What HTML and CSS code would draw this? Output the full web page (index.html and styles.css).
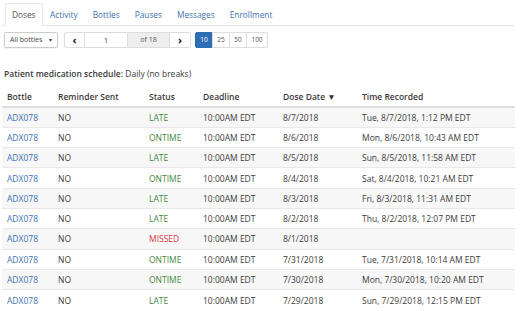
FILE: index.html
```html
<!DOCTYPE html>
<html lang="en">
<head>
    <meta charset="UTF-8">
    <title>Doses</title>
    <link rel="stylesheet" href="styles.css">
</head>
<body>

    <!-- Tabs -->
    <ul class="tabs">
        <li class="active"><a href="#">Doses</a></li>
        <li><a href="#">Activity</a></li>
        <li><a href="#">Bottles</a></li>
        <li><a href="#">Pauses</a></li>
        <li><a href="#">Messages</a></li>
        <li><a href="#">Enrollment</a></li>
    </ul>

    <!-- Controls -->
    <div class="controls">
        <div class="select">All bottles <span class="caret">&#9662;</span></div>
        <div class="pager">
            <span class="btn arrow">&#8249;</span>
            <span class="page-input">1</span>
            <span class="addon">of 18</span>
            <span class="btn arrow">&#8250;</span>
        </div>
        <div class="sizes">
            <span class="size active">10</span>
            <span class="size">25</span>
            <span class="size">50</span>
            <span class="size">100</span>
        </div>
    </div>

    <p class="schedule"><b>Patient medication schedule:</b> Daily (no breaks)</p>

    <!-- Doses table -->
    <table class="doses">
        <colgroup>
            <col class="c-bottle">
            <col class="c-reminder">
            <col class="c-status">
            <col class="c-deadline">
            <col class="c-date">
            <col>
        </colgroup>
        <thead>
            <tr>
                <th>Bottle</th>
                <th>Reminder Sent</th>
                <th>Status</th>
                <th>Deadline</th>
                <th>Dose Date &#9660;</th>
                <th>Time Recorded</th>
            </tr>
        </thead>
        <tbody>
            <tr><td><a href="#">ADX078</a></td><td>NO</td><td class="late">LATE</td><td>10:00AM EDT</td><td>8/7/2018</td><td>Tue, 8/7/2018, 1:12 PM EDT</td></tr>
            <tr><td><a href="#">ADX078</a></td><td>NO</td><td class="ontime">ONTIME</td><td>10:00AM EDT</td><td>8/6/2018</td><td>Mon, 8/6/2018, 10:43 AM EDT</td></tr>
            <tr><td><a href="#">ADX078</a></td><td>NO</td><td class="late">LATE</td><td>10:00AM EDT</td><td>8/5/2018</td><td>Sun, 8/5/2018, 11:58 AM EDT</td></tr>
            <tr><td><a href="#">ADX078</a></td><td>NO</td><td class="ontime">ONTIME</td><td>10:00AM EDT</td><td>8/4/2018</td><td>Sat, 8/4/2018, 10:21 AM EDT</td></tr>
            <tr><td><a href="#">ADX078</a></td><td>NO</td><td class="late">LATE</td><td>10:00AM EDT</td><td>8/3/2018</td><td>Fri, 8/3/2018, 11:31 AM EDT</td></tr>
            <tr><td><a href="#">ADX078</a></td><td>NO</td><td class="late">LATE</td><td>10:00AM EDT</td><td>8/2/2018</td><td>Thu, 8/2/2018, 12:07 PM EDT</td></tr>
            <tr><td><a href="#">ADX078</a></td><td>NO</td><td class="missed">MISSED</td><td>10:00AM EDT</td><td>8/1/2018</td><td></td></tr>
            <tr><td><a href="#">ADX078</a></td><td>NO</td><td class="ontime">ONTIME</td><td>10:00AM EDT</td><td>7/31/2018</td><td>Tue, 7/31/2018, 10:14 AM EDT</td></tr>
            <tr><td><a href="#">ADX078</a></td><td>NO</td><td class="ontime">ONTIME</td><td>10:00AM EDT</td><td>7/30/2018</td><td>Mon, 7/30/2018, 10:20 AM EDT</td></tr>
            <tr><td><a href="#">ADX078</a></td><td>NO</td><td class="late">LATE</td><td>10:00AM EDT</td><td>7/29/2018</td><td>Sun, 7/29/2018, 12:15 PM EDT</td></tr>
        </tbody>
    </table>

</body>
</html>
```

FILE: styles.css
```css
/* General Reset */
* {
    margin: 0;
    padding: 0;
    box-sizing: border-box;
}

body {
    font-family: 'Open Sans', 'Noto Sans', sans-serif;
    font-size: 8.5px;
    color: #3a3a3a;
    background-color: #fff;
    padding: 3px 5px 0 2px;
    overflow: hidden;
}

a {
    color: #3d72b0;
    text-decoration: none;
}

/* Tabs */
.tabs {
    list-style: none;
    display: flex;
    border-bottom: 1px solid #e6e6e6;
    padding-left: 3px;
    height: 23px;
}

.tabs li {
    margin-bottom: -1px;
}

.tabs li a {
    display: block;
    height: 23px;
    line-height: 22px;
    padding: 0 6px;
    font-size: 8.3px;
    border: 1px solid transparent;
    border-radius: 3px 3px 0 0;
}

.tabs li.active a {
    color: #555;
    background-color: #fff;
    border-color: #e6e6e6 #e6e6e6 #fff;
}

.tabs li + li a {
    padding: 0 6.5px;
}

/* Controls */
.controls {
    display: flex;
    align-items: center;
    margin-top: 6px;
    margin-left: 2px;
    height: 16px;
}

.select {
    width: 54px;
    height: 16px;
    line-height: 14px;
    border: 1px solid #ccc;
    border-radius: 2px;
    padding-left: 5px;
    font-size: 7px;
    color: #444;
    box-shadow: 0 1px 1px rgba(0, 0, 0, 0.05);
}

.select .caret {
    font-size: 6px;
    margin-left: 5px;
}

.pager {
    display: flex;
    margin-left: 6px;
    height: 16px;
}

.pager span {
    display: block;
    height: 16px;
    line-height: 14px;
    border: 1px solid #ddd;
    text-align: center;
    font-size: 7px;
}

.pager .arrow {
    width: 21px;
    font-size: 11px;
    font-weight: bold;
    line-height: 13px;
    color: #222;
}

.pager .arrow:first-child {
    border-radius: 2px 0 0 2px;
}

.pager .arrow:last-child {
    border-radius: 0 2px 2px 0;
    border-left: none;
}

.pager .page-input {
    width: 42px;
    border-left: none;
    border-right: none;
    font-size: 8px;
    color: #555;
}

.pager .addon {
    width: 43px;
    background-color: #eee;
    color: #555;
}

.sizes {
    display: flex;
    margin-left: 4px;
}

.size {
    display: block;
    height: 16px;
    line-height: 14px;
    width: 18px;
    border: 1px solid #ddd;
    margin-left: -1px;
    text-align: center;
    font-size: 6.5px;
    color: #555;
}

.size:last-child {
    width: 22px;
    border-radius: 0 2px 2px 0;
}

.size.active {
    background-color: #2d6db5;
    border-color: #2d6db5;
    color: #fff;
    border-radius: 2px 0 0 2px;
    margin-left: 0;
}

/* Schedule line */
.schedule {
    margin-top: 20px;
    margin-left: 2px;
    font-size: 8.5px;
}

.schedule b {
    font-weight: 600;
}

/* Table */
.doses {
    width: 513px;
    margin-top: 7px;
    border-collapse: collapse;
    table-layout: fixed;
}

.c-bottle { width: 51px; }
.c-reminder { width: 91px; }
.c-status { width: 54px; }
.c-deadline { width: 80px; }
.c-date { width: 79px; }

.doses th,
.doses td {
    text-align: left;
    padding: 0 0 0 5px;
    white-space: nowrap;
}

.doses th {
    height: 21px;
    font-weight: 600;
    border-bottom: 2px solid #ddd;
    vertical-align: middle;
}

.doses td {
    height: 20.3px;
    border-top: 1px solid #e8e8e8;
    vertical-align: middle;
}

.doses tbody tr:nth-child(odd) {
    background-color: #f7f7f7;
}

.late,
.ontime {
    color: #43883a;
}

.missed {
    color: #d8383a;
}
```
